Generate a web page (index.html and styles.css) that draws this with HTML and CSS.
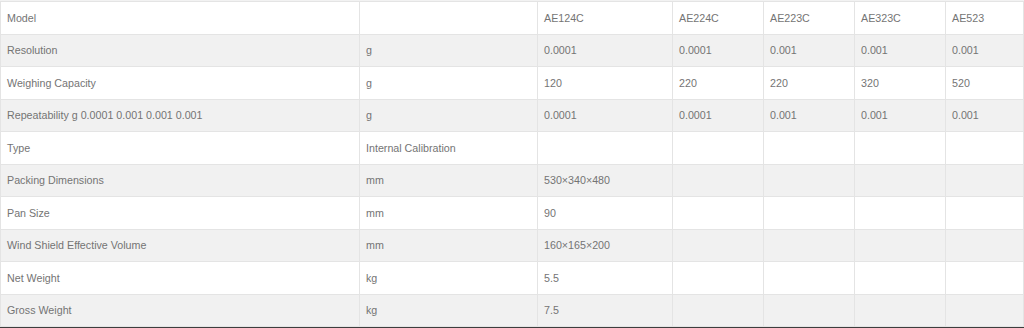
FILE: index.html
```html
<!DOCTYPE html>
<html>
<head>
<meta charset="utf-8">
<link rel="stylesheet" href="styles.css">
</head>
<body>
<div class="page">
<table class="spec">
<colgroup>
<col class="c1"><col class="c2"><col class="c3"><col class="c4"><col class="c5"><col class="c6"><col class="c7">
</colgroup>
<tbody>
<tr><td>Model</td><td></td><td>AE124C</td><td>AE224C</td><td>AE223C</td><td>AE323C</td><td>AE523</td></tr>
<tr><td>Resolution</td><td>g</td><td>0.0001</td><td>0.0001</td><td>0.001</td><td>0.001</td><td>0.001</td></tr>
<tr><td>Weighing Capacity</td><td>g</td><td>120</td><td>220</td><td>220</td><td>320</td><td>520</td></tr>
<tr><td>Repeatability g 0.0001 0.001 0.001 0.001</td><td>g</td><td>0.0001</td><td>0.0001</td><td>0.001</td><td>0.001</td><td>0.001</td></tr>
<tr><td>Type</td><td>Internal Calibration</td><td></td><td></td><td></td><td></td><td></td></tr>
<tr><td>Packing Dimensions</td><td>mm</td><td>530×340×480</td><td></td><td></td><td></td><td></td></tr>
<tr><td>Pan Size</td><td>mm</td><td>90</td><td></td><td></td><td></td><td></td></tr>
<tr><td>Wind Shield Effective Volume</td><td>mm</td><td>160×165×200</td><td></td><td></td><td></td><td></td></tr>
<tr><td>Net Weight</td><td>kg</td><td>5.5</td><td></td><td></td><td></td><td></td></tr>
<tr><td>Gross Weight</td><td>kg</td><td>7.5</td><td></td><td></td><td></td><td></td></tr>
</tbody>
</table>
<div class="footer-bar"></div>
</div>
</body>
</html>
```
FILE: styles.css
```css
html, body {
  margin: 0;
  padding: 0;
  background: #ffffff;
}
.page {
  width: 1024px;
  height: 328px;
  overflow: hidden;
  display: flex;
  flex-direction: column;
  background: #f2f2f2;
}
.spec {
  width: 1023px;
  table-layout: fixed;
  border-collapse: collapse;
  font-family: "Liberation Sans", Arial, sans-serif;
  font-size: 10.7px;
  color: #747474;
  background: #ffffff;
  border: 1px solid #e4e4e4;
  margin-top: 1px;
}
.c1 { width: 359px; }
.c2 { width: 178px; }
.c3 { width: 135px; }
.c4 { width: 91px; }
.c5 { width: 91px; }
.c6 { width: 91px; }
.c7 { width: 78px; }
.spec tr {
  height: 32.5px;
}
.spec tr:nth-child(even) {
  background: #f1f1f1;
}
.spec td {
  border: 1px solid #e4e4e4;
  padding: 0 6px;
  vertical-align: middle;
  white-space: nowrap;
  line-height: 14px;
}
.footer-bar {
  flex: 1;
  background: #3d3d3d;
}
```
